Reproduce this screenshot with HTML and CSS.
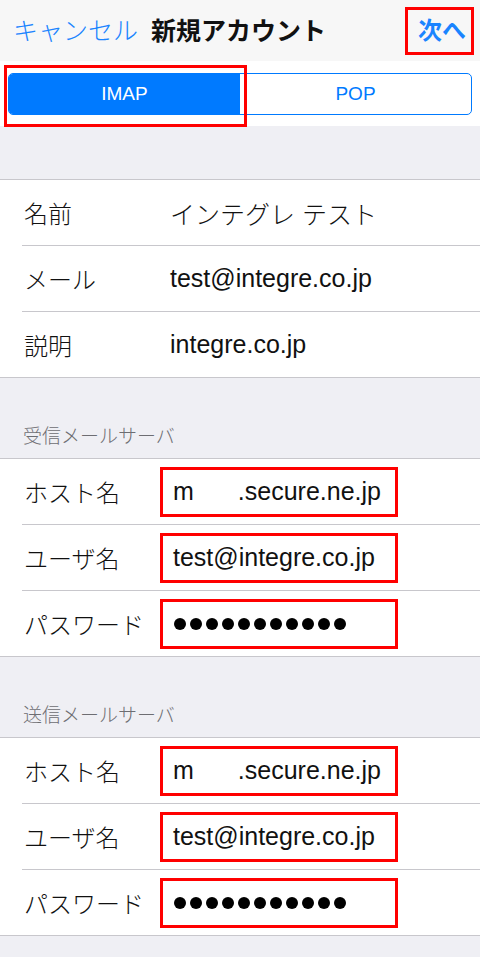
FILE: index.html
```html
<!DOCTYPE html>
<html lang="ja">
<head>
    <meta charset="UTF-8">
    <meta name="viewport" content="width=device-width, initial-scale=1.0">
    <title>新規アカウント</title>
    <link rel="stylesheet" href="styles.css">
</head>
<body>
    <!-- ナビゲーションバー -->
    <div class="nav">
        <span class="nav-cancel">キャンセル</span>
        <span class="nav-title">新規アカウント</span>
        <span class="nav-next">次へ</span>
    </div>

    <!-- IMAP / POP 切り替え -->
    <div class="segment-wrap">
        <div class="segment">
            <div class="segment-item active">IMAP</div>
            <div class="segment-item">POP</div>
        </div>
        <div class="mark-imap"></div>
    </div>

    <!-- アカウント情報 -->
    <div class="group first">
        <div class="row">
            <span class="label">名前</span>
            <span class="value">インテグレ テスト</span>
        </div>
        <div class="row">
            <span class="label">メール</span>
            <span class="value">test@integre.co.jp</span>
        </div>
        <div class="row">
            <span class="label">説明</span>
            <span class="value">integre.co.jp</span>
        </div>
    </div>

    <!-- 受信メールサーバ -->
    <div class="group-header">受信メールサーバ</div>
    <div class="group">
        <div class="row">
            <span class="label">ホスト名</span>
            <span class="box">m<span class="blank"></span>.secure.ne.jp</span>
        </div>
        <div class="row">
            <span class="label">ユーザ名</span>
            <span class="box">test@integre.co.jp</span>
        </div>
        <div class="row">
            <span class="label">パスワード</span>
            <span class="box dots">
                <i></i><i></i><i></i><i></i><i></i><i></i><i></i><i></i><i></i><i></i><i></i>
            </span>
        </div>
    </div>

    <!-- 送信メールサーバ -->
    <div class="group-header">送信メールサーバ</div>
    <div class="group">
        <div class="row">
            <span class="label">ホスト名</span>
            <span class="box">m<span class="blank"></span>.secure.ne.jp</span>
        </div>
        <div class="row">
            <span class="label">ユーザ名</span>
            <span class="box">test@integre.co.jp</span>
        </div>
        <div class="row">
            <span class="label">パスワード</span>
            <span class="box dots">
                <i></i><i></i><i></i><i></i><i></i><i></i><i></i><i></i><i></i><i></i><i></i>
            </span>
        </div>
    </div>
</body>
</html>
```

FILE: styles.css
```css
/* ページ全体 */
body {
    margin: 0;
    background-color: #efeff4;
    font-family: 'Liberation Sans', 'Noto Sans CJK JP', sans-serif;
    color: #111;
}

/* ナビゲーションバー */
.nav {
    height: 61px;
    display: flex;
    align-items: center;
    padding: 0 6px 0 13px;
    background-color: #f7f7f7;
    font-size: 25px;
    line-height: 30px;
}

.nav-cancel {
    font-weight: 300;
    color: #1a84ff;
}

.nav-title {
    margin-left: 13px;
    font-weight: bold;
    color: #111;
}

.nav-next {
    margin-left: auto;
    height: 48px;
    width: 69px;
    box-sizing: border-box;
    display: flex;
    align-items: center;
    padding-left: 10px;
    border: 3px solid #f00;
    font-size: 24px;
    font-weight: bold;
    color: #1a84ff;
}

/* セグメント */
.segment-wrap {
    position: relative;
    background-color: #fff;
    padding: 12px 8px 11px;
}

.segment {
    display: flex;
    height: 42px;
    box-sizing: border-box;
    border: 1.5px solid #007aff;
    border-radius: 5px;
    overflow: hidden;
}

.segment-item {
    flex: 1;
    display: flex;
    align-items: center;
    justify-content: center;
    font-size: 19px;
    color: #007aff;
}

.segment-item.active {
    background-color: #007aff;
    color: #fff;
}

/* IMAP を囲む赤枠 */
.mark-imap {
    position: absolute;
    top: 4px;
    left: 4px;
    width: 243px;
    height: 62px;
    box-sizing: border-box;
    border: 3px solid #f00;
}

/* グループ */
.group {
    background-color: #fff;
    border-top: 1px solid #c8c7cc;
    border-bottom: 1px solid #c8c7cc;
}

.group.first {
    margin-top: 53px;
}

.group-header {
    padding: 47px 0 9px 23px;
    font-size: 19px;
    font-weight: 300;
    line-height: 24px;
    color: #6d6d72;
}

.row {
    height: 65px;
    margin-left: 22px;
    padding-left: 2px;
    display: flex;
    align-items: center;
    font-size: 24px;
}

.row + .row {
    border-top: 1px solid #c8c7cc;
}

.label {
    flex: 0 0 136px;
    font-weight: 300;
    color: #111;
}

.value {
    padding-left: 10px;
    font-size: 25px;
    font-weight: 300;
    color: #111;
}

/* 赤枠の入力欄 */
.box {
    width: 238px;
    height: 50px;
    box-sizing: border-box;
    border: 3px solid #f00;
    padding-left: 10px;
    display: flex;
    align-items: center;
    font-size: 25px;
    color: #111;
}

.blank {
    display: inline-block;
    width: 44px;
}

.dots {
    padding-left: 11px;
    gap: 4px;
}

.dots i {
    width: 12px;
    height: 12px;
    border-radius: 50%;
    background-color: #000;
}
```
